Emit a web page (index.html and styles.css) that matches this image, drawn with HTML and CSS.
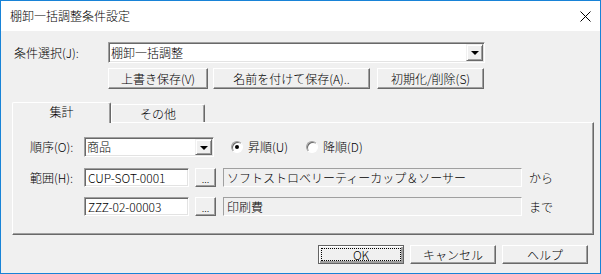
FILE: index.html
```html
<!DOCTYPE html>
<html lang="ja">
<head>
    <meta charset="UTF-8">
    <title>棚卸一括調整条件設定</title>
    <link rel="stylesheet" href="styles.css">
</head>
<body>

    <div class="dialog">
        <div class="titlebar">
            <span class="title">棚卸一括調整条件設定</span>
            <svg class="close" width="11" height="11" viewBox="0 0 11 11">
                <path d="M0.5 0.5 L10.5 10.5 M10.5 0.5 L0.5 10.5" stroke="#000" stroke-width="1" fill="none"/>
            </svg>
        </div>

        <div class="body">
            <!-- condition select -->
            <div class="row">
                <span class="lbl-main">条件選択(J):</span>
                <div class="combo combo-main">
                    <span class="combo-text">棚卸一括調整</span>
                    <span class="drop"><i class="arrow"></i></span>
                </div>
            </div>

            <div class="row btn-row">
                <button class="btn btn-save">上書き保存(V)</button>
                <button class="btn btn-saveas">名前を付けて保存(A)..</button>
                <button class="btn btn-reset">初期化/削除(S)</button>
            </div>

            <!-- tabs -->
            <div class="tabs">
                <div class="tab active">集計</div>
                <div class="tab">その他</div>
            </div>

            <div class="panel">
                <div class="prow prow-order">
                    <span class="plbl">順序(O):</span>
                    <div class="combo combo-order">
                        <span class="combo-text">商品</span>
                        <span class="drop"><i class="arrow"></i></span>
                    </div>
                    <span class="radio radio-asc"><span class="circle checked"></span>昇順(U)</span>
                    <span class="radio radio-desc"><span class="circle"></span>降順(D)</span>
                </div>

                <div class="prow prow-range">
                    <span class="plbl">範囲(H):</span>
                    <div class="field">CUP-SOT-0001</div>
                    <button class="btn btn-dots">...</button>
                    <div class="static">ソフトストロベリーティーカップ＆ソーサー</div>
                    <span class="suffix">から</span>
                </div>

                <div class="prow prow-range2">
                    <span class="plbl"></span>
                    <div class="field">ZZZ-02-00003</div>
                    <button class="btn btn-dots">...</button>
                    <div class="static">印刷費</div>
                    <span class="suffix">まで</span>
                </div>
            </div>

            <div class="footer">
                <button class="btn btn-foot btn-ok">OK</button>
                <button class="btn btn-foot">キャンセル</button>
                <button class="btn btn-foot">ヘルプ</button>
            </div>
        </div>
    </div>

</body>
</html>
```

FILE: styles.css
```css
/* General Styles */
* {
    box-sizing: border-box;
}

body {
    margin: 0;
    font-family: "Noto Sans CJK JP", "Noto Sans", sans-serif;
    font-size: 12px;
    font-weight: 300;
    color: #000;
    background: #fff;
}

.dialog {
    width: 601px;
    height: 274px;
    border: 1px solid #1883d7;
    background: #f0f0f0;
    display: flex;
    flex-direction: column;
}

/* title bar */
.titlebar {
    height: 30px;
    background: #fff;
    display: flex;
    align-items: center;
    justify-content: space-between;
    padding: 0 9px 0 9px;
}

.title {
    font-size: 12px;
    line-height: 14px;
}

.body {
    flex: 1;
    padding: 11px 0 0 13px;
}

.row {
    display: flex;
    align-items: center;
}

.lbl-main {
    width: 94px;
    line-height: 14px;
}

/* combobox */
.combo {
    height: 21px;
    display: flex;
    align-items: center;
    background: #fff;
    border: 1px solid;
    border-color: #a0a0a0 #fff #fff #a0a0a0;
    box-shadow: inset 1px 1px 0 #696969, inset -1px -1px 0 #e3e3e3;
    padding: 1px 1px 1px 2px;
}

.combo-main {
    width: 377px;
}

.combo-order {
    width: 130px;
    height: 20px;
}

.combo-text {
    flex: 1;
    line-height: 14px;
}

.drop {
    width: 17px;
    height: 100%;
    display: flex;
    align-items: center;
    justify-content: center;
    background: #f0f0f0;
    border: 1px solid;
    border-color: #f0f0f0 #696969 #696969 #f0f0f0;
    box-shadow: inset 1px 1px 0 #fff, inset -1px -1px 0 #a0a0a0;
}

.arrow {
    width: 0;
    height: 0;
    border-left: 4px solid transparent;
    border-right: 4px solid transparent;
    border-top: 4px solid #000;
    margin-top: 1px;
}

/* buttons */
.btn {
    font-family: inherit;
    font-size: 12px;
    font-weight: 300;
    line-height: 14px;
    color: #000;
    background: #f0f0f0;
    padding: 0;
    height: 21px;
    border: 1px solid;
    border-color: #fff #696969 #696969 #fff;
    box-shadow: inset -1px -1px 0 #a0a0a0, inset 1px 1px 0 #f0f0f0;
}

.btn-row {
    margin-top: 5px;
    padding-left: 94px;
}

.btn-save {
    width: 100px;
}

.btn-saveas {
    width: 157px;
    margin-left: 5px;
}

.btn-reset {
    width: 107px;
    margin-left: 7px;
}

/* tabs */
.tabs {
    display: flex;
    align-items: flex-end;
    margin: 13px 0 0 -2px;
    height: 20px;
}

.tab {
    position: relative;
    width: 94px;
    height: 18px;
    text-align: center;
    line-height: 17px;
    border: 1px solid;
    border-bottom: none;
    border-color: #fff #696969 #fff #fff;
    border-radius: 2px 2px 0 0;
    box-shadow: inset -1px 0 0 #a0a0a0;
}

.tab.active {
    width: 99px;
    height: 21px;
    margin-bottom: -1px;
    line-height: 17px;
    background: #f0f0f0;
    z-index: 1;
}

.panel {
    width: 582px;
    height: 113px;
    margin-left: -2px;
    border: 1px solid;
    border-color: #fff #696969 #696969 #fff;
    box-shadow: inset -1px -1px 0 #a0a0a0;
    padding: 14px 0 0 17px;
}

.prow {
    display: flex;
    align-items: center;
}

.prow-range {
    margin-top: 11px;
}

.prow-range2 {
    margin-top: 10px;
}

.plbl {
    width: 54px;
    line-height: 14px;
}

/* radio */
.radio {
    display: flex;
    align-items: center;
    line-height: 14px;
}

.radio-asc {
    margin-left: 17px;
}

.radio-desc {
    margin-left: 18px;
}

.circle {
    width: 12px;
    height: 12px;
    border-radius: 50%;
    margin-right: 5px;
    background: #fff;
    border: 1px solid;
    border-color: #a0a0a0 #fff #fff #a0a0a0;
    box-shadow: inset 1px 1px 0 #696969;
    display: flex;
    align-items: center;
    justify-content: center;
}

.circle.checked::after {
    content: "";
    width: 4px;
    height: 4px;
    border-radius: 50%;
    background: #000;
}

/* text fields */
.field {
    width: 105px;
    height: 19px;
    background: #fff;
    line-height: 14px;
    padding: 2px 3px 0;
    border: 1px solid;
    border-color: #a0a0a0 #fff #fff #a0a0a0;
    box-shadow: inset 1px 1px 0 #696969, inset -1px -1px 0 #e3e3e3;
}

.btn-dots {
    width: 21px;
    height: 19px;
    margin-left: 6px;
    font-size: 10px;
    line-height: 10px;
    padding-top: 3px;
}

.static {
    width: 299px;
    height: 19px;
    margin-left: 7px;
    padding: 2px 3px 0;
    line-height: 14px;
    border: 1px solid;
    border-color: #a0a0a0 #fff #fff #a0a0a0;
}

.suffix {
    margin-left: 7px;
    line-height: 14px;
}

/* footer */
.footer {
    display: flex;
    margin: 10px 0 0 304px;
}

.btn-foot {
    width: 86px;
    height: 19px;
    margin-right: 6px;
}

.btn-ok {
    border: 1px solid #646464;
    box-shadow: inset 1px 1px 0 #fff, inset -2px -2px 0 #a0a0a0;
    outline: 1px dotted #000;
    outline-offset: -4px;
}
```
